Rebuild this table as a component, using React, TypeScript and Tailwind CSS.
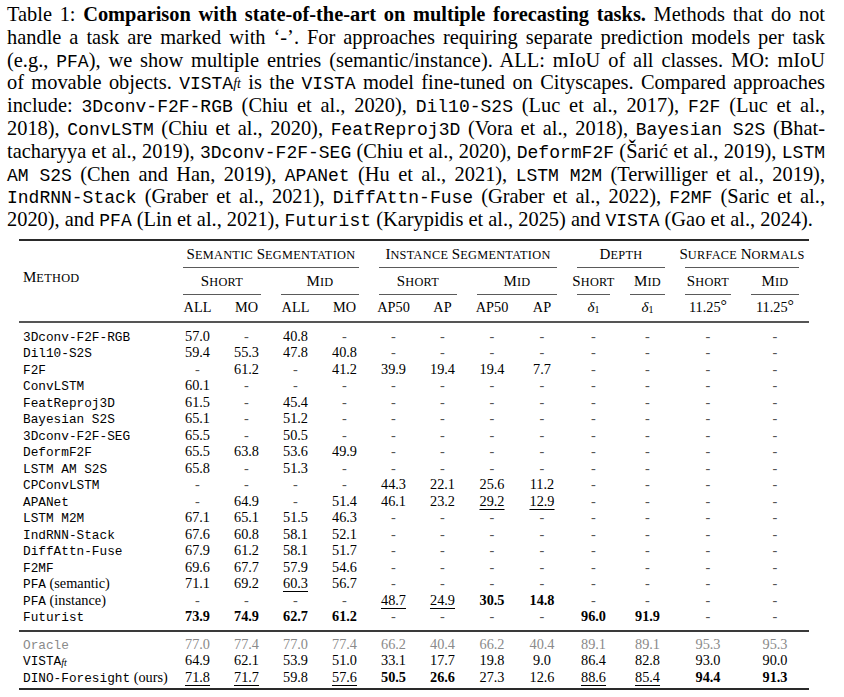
import React from "react";

const serif = "font-['Liberation_Serif',serif]";
const mono = "font-['Liberation_Mono',monospace]";

const M = ({ children }: { children: React.ReactNode }) => (
  <span className={`${mono} text-[18px] inline-block whitespace-pre`}>{children}</span>
);

const Line = ({ children, last }: { children: React.ReactNode; last?: boolean }) => (
  <div
    className={
      last
        ? "h-[22.8px] text-left whitespace-nowrap"
        : "h-[22.8px] text-justify [text-align-last:justify] whitespace-nowrap"
    }
  >
    {children}
  </div>
);

const cols =
  "grid grid-cols-[154px_49px_49px_49px_49px_49px_49px_50px_50px_53px_55px_66px_68px]";

const SC = ({ words }: { words: string[] }) => (
  <span>
    {words.map((w, i) => (
      <React.Fragment key={i}>
        {i > 0 ? " " : ""}
        <span className="text-[15px]">{w[0]}</span>
        <span className="text-[12.3px] tracking-[0.3px]">{w.slice(1).toUpperCase()}</span>
      </React.Fragment>
    ))}
  </span>
);

const HCell = ({ children, span }: { children: React.ReactNode; span: string }) => (
  <div className={`flex flex-col justify-end ${span}`}>
    <div className="h-[17px] leading-[17px] text-center whitespace-nowrap">{children}</div>
    <div className="mt-[4px] mx-[10px] h-px bg-[#5a5a5a]" />
  </div>
);

const LCell = ({ children }: { children: React.ReactNode }) => (
  <div className="pt-[4px] h-[17px] leading-[17px] text-center whitespace-nowrap box-content">{children}</div>
);

const Delta = () => (
  <span>
    <i className="text-[15px]">δ</i>
    <sub className="text-[10px] leading-none relative top-[1px]">1</sub>
  </span>
);

const Deg = () => (
  <span>
    11.25<span className="text-[16px] leading-none relative top-[-1px]">°</span>
  </span>
);

type Row = { name: React.ReactNode; v: string[]; gray?: boolean };

const mn = (s: string) => <span className={`${mono} text-[12.75px]`}>{s}</span>;

const rows1: Row[] = [
  { name: mn("3Dconv-F2F-RGB"), v: ["57.0", "-", "40.8", "-", "-", "-", "-", "-", "-", "-", "-", "-"] },
  { name: mn("Dil10-S2S"), v: ["59.4", "55.3", "47.8", "40.8", "-", "-", "-", "-", "-", "-", "-", "-"] },
  { name: mn("F2F"), v: ["-", "61.2", "-", "41.2", "39.9", "19.4", "19.4", "7.7", "-", "-", "-", "-"] },
  { name: mn("ConvLSTM"), v: ["60.1", "-", "-", "-", "-", "-", "-", "-", "-", "-", "-", "-"] },
  { name: mn("FeatReproj3D"), v: ["61.5", "-", "45.4", "-", "-", "-", "-", "-", "-", "-", "-", "-"] },
  { name: mn("Bayesian S2S"), v: ["65.1", "-", "51.2", "-", "-", "-", "-", "-", "-", "-", "-", "-"] },
  { name: mn("3Dconv-F2F-SEG"), v: ["65.5", "-", "50.5", "-", "-", "-", "-", "-", "-", "-", "-", "-"] },
  { name: mn("DeformF2F"), v: ["65.5", "63.8", "53.6", "49.9", "-", "-", "-", "-", "-", "-", "-", "-"] },
  { name: mn("LSTM AM S2S"), v: ["65.8", "-", "51.3", "-", "-", "-", "-", "-", "-", "-", "-", "-"] },
  { name: mn("CPConvLSTM"), v: ["-", "-", "-", "-", "44.3", "22.1", "25.6", "11.2", "-", "-", "-", "-"] },
  { name: mn("APANet"), v: ["-", "64.9", "-", "51.4", "46.1", "23.2", "29.2_u", "12.9_u", "-", "-", "-", "-"] },
  { name: mn("LSTM M2M"), v: ["67.1", "65.1", "51.5", "46.3", "-", "-", "-", "-", "-", "-", "-", "-"] },
  { name: mn("IndRNN-Stack"), v: ["67.6", "60.8", "58.1", "52.1", "-", "-", "-", "-", "-", "-", "-", "-"] },
  { name: mn("DiffAttn-Fuse"), v: ["67.9", "61.2", "58.1", "51.7", "-", "-", "-", "-", "-", "-", "-", "-"] },
  { name: mn("F2MF"), v: ["69.6", "67.7", "57.9", "54.6", "-", "-", "-", "-", "-", "-", "-", "-"] },
  {
    name: (
      <>
        {mn("PFA")} (semantic)
      </>
    ),
    v: ["71.1", "69.2", "60.3_u", "56.7", "-", "-", "-", "-", "-", "-", "-", "-"],
  },
  {
    name: (
      <>
        {mn("PFA")} (instance)
      </>
    ),
    v: ["-", "-", "-", "-", "48.7_u", "24.9_u", "30.5_b", "14.8_b", "-", "-", "-", "-"],
  },
  { name: mn("Futurist"), v: ["73.9_b", "74.9_b", "62.7_b", "61.2_b", "-", "-", "-", "-", "96.0_b", "91.9_b", "-", "-"] },
];

const rows2: Row[] = [
  { name: mn("Oracle"), gray: true, v: ["77.0", "77.4", "77.0", "77.4", "66.2", "40.4", "66.2", "40.4", "89.1", "89.1", "95.3", "95.3"] },
  {
    name: (
      <>
        {mn("VISTA")}
        <sub className="text-[10px] leading-none italic relative top-[1px]">ft</sub>
      </>
    ),
    v: ["64.9", "62.1", "53.9", "51.0", "33.1", "17.7", "19.8", "9.0", "86.4", "82.8", "93.0", "90.0"],
  },
  {
    name: (
      <>
        {mn("DINO-Foresight")} (ours)
      </>
    ),
    v: ["71.8_u", "71.7_u", "59.8", "57.6_u", "50.5_b", "26.6_b", "27.3", "12.6", "88.6_u", "85.4_u", "94.4_b", "91.3_b"],
  },
];

const Val = ({ s }: { s: string }) => {
  const [v, f] = s.split("_");
  if (v === "-") return <span className="text-[#555]">-</span>;
  if (f === "b") return <span className="font-bold">{v}</span>;
  if (f === "u")
    return <span className="underline underline-offset-[3px] decoration-[1px]">{v}</span>;
  return <span>{v}</span>;
};

const BodyRow = ({ r }: { r: Row }) => (
  <div className={`${cols} h-[16.5px] leading-[16.5px] ${r.gray ? "text-[#8a8a8a]" : "text-black"}`}>
    <div className="pl-[4px] whitespace-nowrap">{r.name}</div>
    {r.v.map((s, i) => (
      <div key={i} className="text-center whitespace-nowrap">
        <Val s={s} />
      </div>
    ))}
  </div>
);

export default function App() {
  return (
    <div className={`w-[844px] h-[697px] bg-white overflow-hidden text-black ${serif}`}>
      <div className="pl-[7px] w-[825px] pt-[3px] text-[20.4px] leading-[22.8px]">
        <Line>
          Table 1: <b>Comparison with state-of-the-art on multiple forecasting tasks.</b> Methods that do not
        </Line>
        <Line>handle a task are marked with ‘-’. For approaches requiring separate prediction models per task</Line>
        <Line>
          (e.g., <M>PFA</M>), we show multiple entries (semantic/instance). ALL: mIoU of all classes. MO: mIoU
        </Line>
        <Line>
          of movable objects. <M>VISTA</M>
          <sub className="italic text-[14px] leading-none relative top-[-1px]">ft</sub> is the <M>VISTA</M> model fine-tuned on Cityscapes. Compared approaches
        </Line>
        <Line>
          include: <M>3Dconv-F2F-RGB</M> (Chiu et al., 2020), <M>Dil10-S2S</M> (Luc et al., 2017), <M>F2F</M> (Luc et al.,
        </Line>
        <Line>
          2018), <M>ConvLSTM</M> (Chiu et al., 2020), <M>FeatReproj3D</M> (Vora et al., 2018), <M>Bayesian S2S</M> (Bhat-
        </Line>
        <Line>
          tacharyya et al., 2019), <M>3Dconv-F2F-SEG</M> (Chiu et al., 2020), <M>DeformF2F</M> (Šarić et al., 2019), <M>LSTM</M>
        </Line>
        <Line>
          <M>AM S2S</M> (Chen and Han, 2019), <M>APANet</M> (Hu et al., 2021), <M>LSTM M2M</M> (Terwilliger et al., 2019),
        </Line>
        <Line>
          <M>IndRNN-Stack</M> (Graber et al., 2021), <M>DiffAttn-Fuse</M> (Graber et al., 2022), <M>F2MF</M> (Saric et al.,
        </Line>
        <Line last>
          2020), and <M>PFA</M> (Lin et al., 2021), <M>Futurist</M> (Karypidis et al., 2025) and <M>VISTA</M> (Gao et al., 2024).
        </Line>
      </div>

      <div className="ml-[19px] w-[790px] mt-[8px] text-[14.3px]">
        <div className="h-[2px] bg-[#2a2a2a]" />
        <div className={`${cols} grid-rows-[27px_27px_26px]`}>
          <div className="row-span-3 pl-[4px] pt-[28px] leading-[17px] whitespace-nowrap">
            <SC words={["Method"]} />
          </div>
          <HCell span="col-span-4">
            <SC words={["Semantic", "Segmentation"]} />
          </HCell>
          <HCell span="col-span-4">
            <SC words={["Instance", "Segmentation"]} />
          </HCell>
          <HCell span="col-span-2">
            <SC words={["Depth"]} />
          </HCell>
          <HCell span="col-span-2">
            <SC words={["Surface", "Normals"]} />
          </HCell>

          <HCell span="col-span-2">
            <SC words={["Short"]} />
          </HCell>
          <HCell span="col-span-2">
            <SC words={["Mid"]} />
          </HCell>
          <HCell span="col-span-2">
            <SC words={["Short"]} />
          </HCell>
          <HCell span="col-span-2">
            <SC words={["Mid"]} />
          </HCell>
          <HCell span="col-span-1">
            <SC words={["Short"]} />
          </HCell>
          <HCell span="col-span-1">
            <SC words={["Mid"]} />
          </HCell>
          <HCell span="col-span-1">
            <SC words={["Short"]} />
          </HCell>
          <HCell span="col-span-1">
            <SC words={["Mid"]} />
          </HCell>

          <LCell>ALL</LCell>
          <LCell>MO</LCell>
          <LCell>ALL</LCell>
          <LCell>MO</LCell>
          <LCell>AP50</LCell>
          <LCell>AP</LCell>
          <LCell>AP50</LCell>
          <LCell>AP</LCell>
          <LCell>
            <Delta />
          </LCell>
          <LCell>
            <Delta />
          </LCell>
          <LCell>
            <Deg />
          </LCell>
          <LCell>
            <Deg />
          </LCell>
        </div>
        <div className="h-[2px] bg-[#555]" />
        <div className="pt-[5px] pb-[5px]">
          {rows1.map((r, i) => (
            <BodyRow key={i} r={r} />
          ))}
        </div>
        <div className="h-[2px] bg-[#3a3a3a]" />
        <div className="pt-[4px] pb-[3px]">
          {rows2.map((r, i) => (
            <BodyRow key={i} r={r} />
          ))}
        </div>
        <div className="h-[2px] bg-[#2a2a2a]" />
      </div>
    </div>
  );
}
